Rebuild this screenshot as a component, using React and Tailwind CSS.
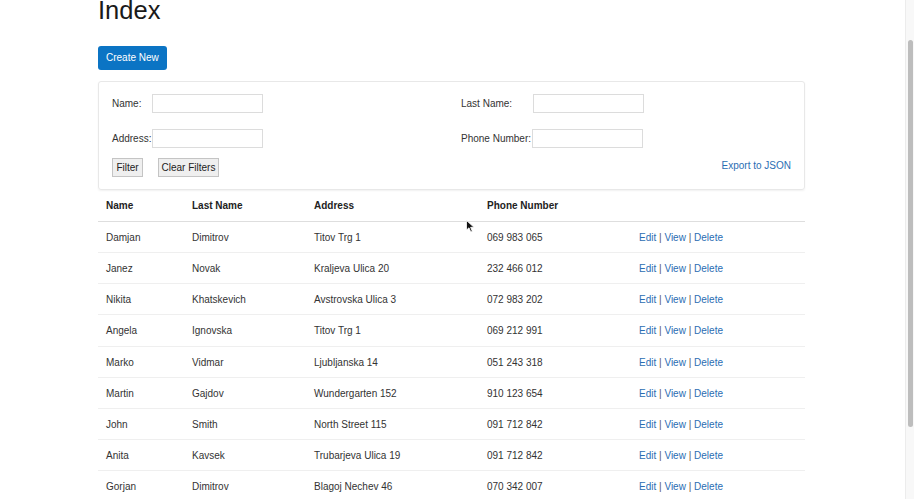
import React from "react";

const people = [
    { name: "Damjan", lastName: "Dimitrov", address: "Titov Trg 1", phone: "069 983 065" },
    { name: "Janez", lastName: "Novak", address: "Kraljeva Ulica 20", phone: "232 466 012" },
    { name: "Nikita", lastName: "Khatskevich", address: "Avstrovska Ulica 3", phone: "072 983 202" },
    { name: "Angela", lastName: "Ignovska", address: "Titov Trg 1", phone: "069 212 991" },
    { name: "Marko", lastName: "Vidmar", address: "Ljubljanska 14", phone: "051 243 318" },
    { name: "Martin", lastName: "Gajdov", address: "Wundergarten 152", phone: "910 123 654" },
    { name: "John", lastName: "Smith", address: "North Street 115", phone: "091 712 842" },
    { name: "Anita", lastName: "Kavsek", address: "Trubarjeva Ulica 19", phone: "091 712 842" },
    { name: "Gorjan", lastName: "Dimitrov", address: "Blagoj Nechev 46", phone: "070 342 007" },
];

const Field = ({ label, labelWidth }) => (
    <div className="flex items-center">
        <label className={`${labelWidth} shrink-0 text-[10px] text-[#333] pt-[1px]`}>{label}</label>
        <input className="w-[111px] h-[19px] border border-[#dcdcdc] bg-white outline-none" />
    </div>
);

const App = () => (
    <div
        className="relative min-h-[499px] w-[914px] bg-white overflow-hidden"
        style={{ fontFamily: '"Liberation Sans", Arial, sans-serif' }}
    >
        <div className="ml-[98px] w-[707px]">
            <h1 className="-mt-[2px] text-[25.5px] leading-none text-[#1a1a1a]">Index</h1>

            <button className="mt-[22px] h-[24px] px-[8px] rounded-[3px] bg-[#0b74c4] text-white text-[10px]">
                Create New
            </button>

            <div className="mt-[11px] h-[109px] border border-[#e8e8e8] rounded-[3px] shadow-[0_1px_2px_rgba(0,0,0,0.06)] px-[13px] pt-[12px]">
                <div className="flex">
                    <div className="w-[349px] flex flex-col gap-[16px]">
                        <Field label="Name:" labelWidth="w-[40px]" />
                        <Field label="Address:" labelWidth="w-[40px]" />
                    </div>
                    <div className="flex flex-col gap-[16px]">
                        <Field label="Last Name:" labelWidth="w-[72px]" />
                        <Field label="Phone Number:" labelWidth="w-[71px]" />
                    </div>
                </div>
                <div className="mt-[10px] flex items-center">
                    <button className="h-[19px] w-[31px] border border-[#c4c4c4] bg-[#efefef] text-[10px] text-[#222]">
                        Filter
                    </button>
                    <button className="ml-[15px] h-[19px] w-[61px] border border-[#c4c4c4] bg-[#efefef] text-[10px] text-[#222]">
                        Clear Filters
                    </button>
                    <a className="ml-auto -mt-[3px] text-[10px] text-[#2a6db3]">Export to JSON</a>
                </div>
            </div>

            <table className="w-full table-fixed text-[10px] text-[#333] border-collapse">
                <colgroup>
                    <col className="w-[86px]" />
                    <col className="w-[122px]" />
                    <col className="w-[173px]" />
                    <col className="w-[152px]" />
                    <col />
                </colgroup>
                <thead>
                    <tr className="h-[32px] border-b border-[#dedede]">
                        <th className="text-left px-2 pt-[1px] font-bold text-[#222]">Name</th>
                        <th className="text-left px-2 pt-[1px] font-bold text-[#222]">Last Name</th>
                        <th className="text-left px-2 pt-[1px] font-bold text-[#222]">Address</th>
                        <th className="text-left px-2 pt-[1px] font-bold text-[#222]">Phone Number</th>
                        <th />
                    </tr>
                </thead>
                <tbody>
                    {people.map((p, i) => (
                        <tr key={i} className="h-[31.15px] border-b border-[#efefef]">
                            <td className="px-2 pt-[1px]">{p.name}</td>
                            <td className="px-2 pt-[1px]">{p.lastName}</td>
                            <td className="px-2 pt-[1px]">{p.address}</td>
                            <td className="px-2 pt-[1px]">{p.phone}</td>
                            <td className="px-2 pt-[1px] text-[#2a6db3]">
                                <a>Edit</a> <span className="text-[#555]">|</span> <a>View</a>{" "}
                                <span className="text-[#555]">|</span> <a>Delete</a>
                            </td>
                        </tr>
                    ))}
                </tbody>
            </table>
        </div>

        {/* mouse pointer */}
        <svg className="absolute left-[466px] top-[220px]" width="9" height="13" viewBox="0 0 9 13">
            <path d="M0.5 0.5 L0.5 10 L3 7.8 L4.8 12 L6.3 11.3 L4.6 7.3 L8 7.3 Z" fill="#111" stroke="#fff" strokeWidth="0.8" />
        </svg>

        {/* scrollbar */}
        <div className="absolute right-0 top-0 h-[499px] w-[9px] bg-[#f8f8f8] border-l border-[#ececec]">
            <div className="ml-[2px] mt-[40px] h-[387px] w-[5px] rounded-full bg-[#bdbdbd]" />
        </div>
    </div>
);

export default App;
